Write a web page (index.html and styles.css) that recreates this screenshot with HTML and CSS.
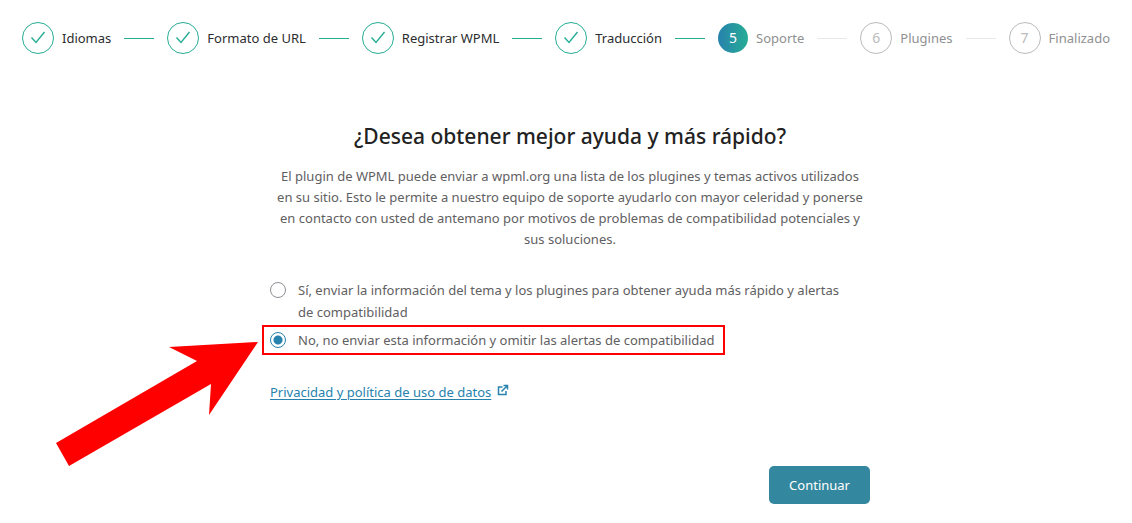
FILE: index.html
```html
<!DOCTYPE html>
<html lang="es">
  <head>
    <meta charset="utf-8">
    <title>WPML - Soporte</title>
    <link rel="stylesheet" href="styles.css">
  </head>
  <body>
    <ol class="steps">
      <li class="step done">
        <span class="circle"><svg viewBox="0 0 16 16"><path d="M1.500 7.500 6 12.500 14.500 2" /></svg></span>
        <span class="label">Idiomas</span>
      </li>
      <li class="line done"></li>
      <li class="step done">
        <span class="circle"><svg viewBox="0 0 16 16"><path d="M1.500 7.500 6 12.500 14.500 2" /></svg></span>
        <span class="label">Formato de URL</span>
      </li>
      <li class="line done"></li>
      <li class="step done">
        <span class="circle"><svg viewBox="0 0 16 16"><path d="M1.500 7.500 6 12.500 14.500 2" /></svg></span>
        <span class="label">Registrar WPML</span>
      </li>
      <li class="line done"></li>
      <li class="step done">
        <span class="circle"><svg viewBox="0 0 16 16"><path d="M1.500 7.500 6 12.500 14.500 2" /></svg></span>
        <span class="label">Traducción</span>
      </li>
      <li class="line done"></li>
      <li class="step current">
        <span class="circle">5</span>
        <span class="label">Soporte</span>
      </li>
      <li class="line"></li>
      <li class="step">
        <span class="circle">6</span>
        <span class="label">Plugines</span>
      </li>
      <li class="line"></li>
      <li class="step">
        <span class="circle">7</span>
        <span class="label">Finalizado</span>
      </li>
    </ol>

    <main>
      <div class="content">
        <h1>¿Desea obtener mejor ayuda y más rápido?</h1>
        <p class="intro">
          El plugin de WPML puede enviar a wpml.org una lista de los plugines y temas activos utilizados
          en su sitio. Esto le permite a nuestro equipo de soporte ayudarlo con mayor celeridad y ponerse
          en contacto con usted de antemano por motivos de problemas de compatibilidad potenciales y
          sus soluciones.
        </p>

        <form>
          <div class="option">
            <input type="radio" name="support" id="send">
            <label for="send">Sí, enviar la información del tema y los plugines para obtener ayuda más rápido y alertas de compatibilidad</label>
          </div>
          <div class="option highlight">
            <input type="radio" name="support" id="skip" checked>
            <label for="skip">No, no enviar esta información y omitir las alertas de compatibilidad</label>
            <svg class="arrow" viewBox="0 0 202 125"><path d="M202 0 113 5 141 19 0 101 13 124 155 42 153 73Z" /></svg>
          </div>

          <p class="privacy">
            <a href="#">Privacidad y política de uso de datos</a>
            <svg viewBox="0 0 12 12"><path d="M5.500 3H1.500V10.500H9V7M4.500 7.500 10 2M6.500 1.500H10.500V5.500" /></svg>
          </p>

          <div class="actions">
            <button type="button">Continuar</button>
          </div>
        </form>
      </div>
    </main>
  </body>
</html>
```

FILE: styles.css
```css
* {
  box-sizing: border-box;
}
body {
  margin: 0;
  background: #fff;
  color: #5f6062;
  font-family: "Segoe UI", "Noto Sans", sans-serif;
  font-size: 13px;
  line-height: 22px;
}
.steps {
  display: flex;
  align-items: center;
  justify-content: space-between;
  margin: 0;
  padding: 22px 22px 0;
  list-style: none;
}
.step {
  display: flex;
  align-items: center;
  gap: 8px;
  color: #8f9092;
  white-space: nowrap;
}
.step.done {
  color: #2c2d2f;
}
.circle {
  display: flex;
  align-items: center;
  justify-content: center;
  width: 32px;
  height: 32px;
  border: 1px solid #bbb;
  border-radius: 50%;
  color: #bbb;
  font-size: 14px;
}
.done .circle {
  border-color: #27ad95;
}
.circle svg {
  width: 16px;
  height: 16px;
  fill: none;
  stroke: #27ad95;
  stroke-width: 1.4;
}
.current .circle {
  width: 30px;
  height: 30px;
  border: none;
  background: linear-gradient(90deg, #2782ad, #27ad95);
  color: #fff;
}
.line {
  width: 30px;
  height: 1px;
  background: #e8e8e8;
}
.line.done {
  background: #27ad95;
}
main {
  padding: 66px 0 0 8px;
}
.content {
  max-width: 600px;
  margin: 0 auto;
}
h1 {
  margin: 0 0 14px;
  color: #222;
  font-size: 21px;
  font-weight: 500;
  line-height: 32px;
  text-align: center;
}
.intro {
  margin: 0 0 29px;
  padding: 0 3px;
  line-height: 21px;
  text-align: center;
}
.option {
  display: flex;
  align-items: flex-start;
  gap: 12px;
  padding-right: 16px;
}
.option input {
  appearance: none;
  flex: none;
  width: 16px;
  height: 16px;
  margin: 3px 0;
  border: 1px solid #8c8f94;
  border-radius: 50%;
  background: #fff;
}
.option input:checked {
  border-color: #2782ad;
  background: radial-gradient(circle, #2782ad 4px, #fff 5px);
}
.highlight {
  position: relative;
  width: fit-content;
  margin: 2px -8px 0;
  padding: 2px 8px 2px 6px;
  border: 2px solid #f00;
}
.arrow {
  position: absolute;
  top: 15px;
  right: 100%;
  width: 202px;
  height: 125px;
  margin-right: 6px;
  fill: #f00;
}
.privacy {
  display: flex;
  gap: 6px;
  margin: 26px 0 0;
}
.privacy a {
  color: #2782ad;
  text-underline-offset: 2px;
}
.privacy svg {
  width: 12px;
  height: 12px;
  margin-top: 3px;
  fill: none;
  stroke: #2782ad;
  stroke-width: 1.5;
}
.actions {
  display: flex;
  justify-content: flex-end;
  margin-top: 63px;
}
button {
  padding: 8px 20px;
  border: none;
  border-radius: 5px;
  background: #33879e;
  color: #fff;
  font: inherit;
  cursor: pointer;
}
```
